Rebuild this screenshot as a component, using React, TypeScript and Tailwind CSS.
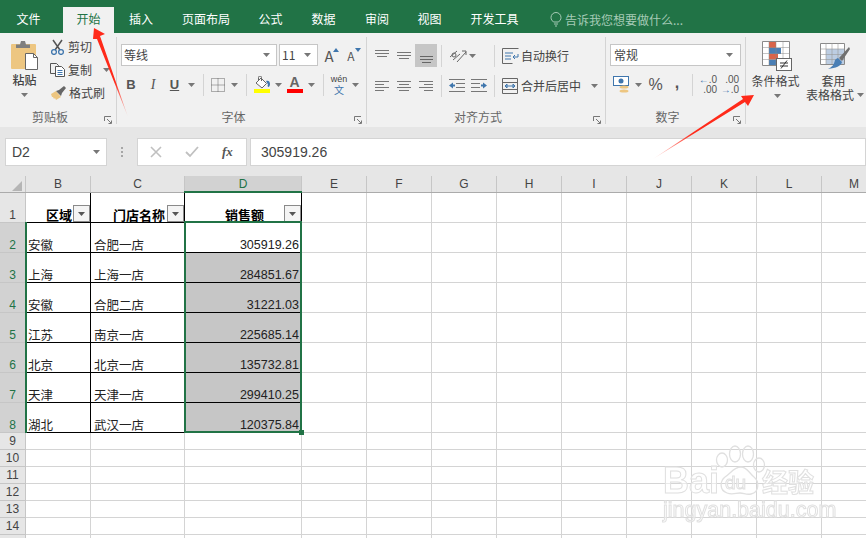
import React from "react";

const FONT = "font-['Noto_Sans_CJK_SC','Liberation_Sans',sans-serif]";
const NUM = "font-['Liberation_Sans','Noto_Sans_CJK_SC',sans-serif]";

const Caret = ({ c = "#777" }: { c?: string }) => (
  <svg width="7" height="4" viewBox="0 0 7 4"><path d="M0 0h7L3.5 4z" fill={c} /></svg>
);
const Slot = ({ w, children }: { w: string; children?: React.ReactNode }) => (
  <div className={`${w} h-full flex items-center justify-center shrink-0`}>{children}</div>
);
const Sep = () => <div className="w-px h-[22px] bg-[#d4d4d4]" />;
const Launcher = () => (
  <svg className="absolute right-[4px] bottom-[0px]" width="8" height="8" viewBox="0 0 8 8" fill="none" stroke="#777">
    <path d="M.5 5V.5H7" /><path d="M3 3l4 4M4.5 7.5h3v-3" />
  </svg>
);
const Lines = ({ rows, color = "#777" }: { rows: [number, number, number][]; color?: string }) => (
  <svg width="16" height="16" viewBox="0 0 16 16" stroke={color}>
    {rows.map((r, i) => <path key={i} d={`M${r[0]} ${r[2] + 0.5}H${r[1]}`} />)}
  </svg>
);

const Group = ({ w, label, launcher, children }: { w: string; label: string; launcher?: boolean; children: React.ReactNode }) => (
  <div className={`${w} shrink-0 h-[87px] relative flex flex-col border-r border-[#d4d4d4]`}>
    <div className="flex-1 min-h-0">{children}</div>
    <div className="h-[14px] text-center text-[12px] leading-[14px] text-[#666] pr-[16px]">{label}</div>
    {launcher && <Launcher />}
  </div>
);

const Clipboard = () => (
  <Group w="w-[117px]" label="剪贴板" launcher>
    <div className="flex h-full">
      <div className="w-[50px] flex flex-col items-center pt-[4px] pr-[1px]">
        <svg width="28" height="29" viewBox="0 0 28 29">
          <path d="M1 3h23a1 1 0 011 1v24H1a1 1 0 01-1-1V4a1 1 0 011-1z" fill="#edc681" />
          <path d="M5 7V3.500h4L10 0h4l1 3.500h4V7z" fill="#7f7f7f" />
          <path d="M14.500 12.500h8l4 4v12h-12z" fill="#fff" stroke="#666" />
          <path d="M22.500 12.500v4h4" fill="none" stroke="#666" />
        </svg>
        <div className="text-[12px] leading-[14px] text-[#444] mt-[3px] font-medium">粘贴</div>
        <div className="mt-[6px] leading-[0]"><Caret /></div>
      </div>
      <div className="flex flex-col -mt-[2px] text-[12px] text-[#444]">
        <div className="h-[23px] flex items-center gap-[3px]">
          <svg width="15" height="16" viewBox="0 0 15 16" fill="none">
            <path d="M3 1l7 10M12 1L5 11" stroke="#555" strokeWidth="1.500" />
            <circle cx="4" cy="13" r="2.400" stroke="#3f76ad" strokeWidth="1.300" /><circle cx="11" cy="13" r="2.400" stroke="#3f76ad" strokeWidth="1.300" />
          </svg>
          <span>剪切</span>
        </div>
        <div className="h-[23px] flex items-center gap-[3px]">
          <svg width="15" height="14" viewBox="0 0 15 14" fill="none" stroke="#555">
            <path d="M.5.5h6l2 2v8h-8z" fill="#f1f1f1" /><path d="M5.500 3.500h6l3 3v7h-9z" fill="#fff" /><path d="M7.500 7.500h5M7.500 9.500h5M7.500 11.500h5" stroke="#3f76ad" />
          </svg>
          <span>复制</span>
          <span className="ml-[8px] leading-[0]"><Caret /></span>
        </div>
        <div className="h-[23px] flex items-center gap-[3px]">
          <svg width="16" height="16" viewBox="0 0 16 16">
            <path d="M1 9l5-3 5 6-5 3-1-2-1 1-1-2-1 0z" fill="#edc681" />
            <path d="M6 6l3-1 5-4 2 2-4 5-1 3z" fill="#666" />
          </svg>
          <span>格式刷</span>
        </div>
      </div>
    </div>
  </Group>
);

const FontGroup = () => (
  <Group w="w-[250px]" label="字体" launcher>
    <div className="pt-[7px] pl-[4px]">
      <div className="flex h-[22px] items-center">
        <div className="w-[156px] h-full bg-white border border-[#c6c6c6] flex items-center pl-[2px] pr-[6px] text-[12px] text-[#444]">
          <span className="flex-1">等线</span><Caret />
        </div>
        <div className="w-[39px] ml-[2px] h-full bg-white border border-[#c6c6c6] flex items-center pl-[2px] pr-[6px] text-[12px] text-[#444]">
          <span className="flex-1">11</span><Caret />
        </div>
        <Slot w="w-[22px]">
          <span className="relative text-[15px] text-[#555] leading-none">A<svg className="absolute -right-[5px] top-0" width="6" height="4"><path d="M0 4l3-4 3 4z" fill="#3f76ad" /></svg></span>
        </Slot>
        <Slot w="w-[22px]">
          <span className="relative text-[12px] text-[#555] leading-none mt-[2px]">A<svg className="absolute -right-[6px] -top-[2px]" width="6" height="4"><path d="M0 0h6L3 4z" fill="#3f76ad" /></svg></span>
        </Slot>
      </div>
      <div className="flex h-[23px] items-center mt-[7px] -ml-[1px] text-[#555]">
        <Slot w="w-[22px]"><span className={`${NUM} font-bold text-[13px]`}>B</span></Slot>
        <Slot w="w-[22px]"><span className="font-['Liberation_Serif'] italic text-[14px]">I</span></Slot>
        <Slot w="w-[21px]"><span className={`${NUM} underline text-[13px] font-bold`}>U</span></Slot>
        <Slot w="w-[13px]"><Caret /></Slot>
        <Slot w="w-[10px]"><Sep /></Slot>
        <Slot w="w-[20px]">
          <svg width="14" height="14" viewBox="0 0 14 14" fill="none" stroke="#666" strokeDasharray="1 1"><path d="M.5.5h13v13H.5zM7 .5v13M.5 7h13" /></svg>
        </Slot>
        <Slot w="w-[13px]"><Caret /></Slot>
        <Slot w="w-[10px]"><Sep /></Slot>
        <Slot w="w-[21px]">
          <svg width="16" height="17" viewBox="0 0 16 17">
            <path d="M2 7l5-5 5.500 5.500L8 12z" fill="#fff" stroke="#666" /><path d="M4.500 4V1.500a1.500 1.500 0 013 0V5" fill="none" stroke="#666" />
            <path d="M12 5c2-1 4 0 4 3 0 2-1 3-1.500 3S13 10 14 8.500z" fill="#3f76ad" />
            <rect y="13" width="16" height="4" fill="#ffff00" />
          </svg>
        </Slot>
        <Slot w="w-[12px]"><Caret /></Slot>
        <Slot w="w-[21px]">
          <div className="flex flex-col items-center w-[16px]">
            <span className={`${NUM} text-[14px] font-bold leading-[13px] text-[#666]`}>A</span>
            <div className="w-[16px] h-[4px] bg-[#ff0000]" />
          </div>
        </Slot>
        <Slot w="w-[13px]"><Caret /></Slot>
        <Slot w="w-[10px]"><Sep /></Slot>
        <Slot w="w-[22px]">
          <div className={`${NUM} flex flex-col items-center leading-none`}>
            <span className="text-[9px] leading-[10px] text-[#444]">wén</span>
            <span className={`${FONT} text-[10px] leading-[11px] text-[#3f76ad]`}>文</span>
          </div>
        </Slot>
        <Slot w="w-[10px]"><Caret /></Slot>
      </div>
    </div>
  </Group>
);

const AlignGroup = () => (
  <Group w="w-[239px]" label="对齐方式" launcher>
    <div className="pt-[7px] pl-[4px] text-[12px] text-[#444]">
      <div className="flex h-[23px] items-center">
        <Slot w="w-[22px]"><Lines rows={[[1, 15, 2], [1, 15, 5], [3, 13, 8]]} /></Slot>
        <Slot w="w-[22px]"><Lines rows={[[1, 15, 4], [1, 15, 7], [3, 13, 10]]} /></Slot>
        <Slot w="w-[22px] bg-[#c6c6c6]"><Lines rows={[[2, 15, 8], [2, 15, 11], [4, 13, 14]]} color="#666" /></Slot>
        <Slot w="w-[8px]"><Sep /></Slot>
        <Slot w="w-[18px] ml-[4px]">
          <svg width="18" height="16" viewBox="0 0 18 16" fill="none" stroke="#666">
            <path d="M1 9l7-6M4 12l7-6" /><circle cx="5" cy="7" r="2" /><path d="M8 14L17 4M13 3h4v4" />
          </svg>
        </Slot>
        <Slot w="w-[10px]"><Caret /></Slot>
        <div className="ml-[17px]"><Sep /></div>
        <div className="flex items-center gap-[2px] ml-[7px]">
          <svg width="17" height="16" viewBox="0 0 17 16" fill="none" stroke="#666">
            <path d="M.5.5h16M.5 15.500h10M.5.5v15" /><path d="M3 5h8M3 8h6M3 11h6" stroke="#3f76ad" /><path d="M16 6v3h-5M13 7l-2 2 2 2" stroke="#3f76ad" />
          </svg>
          <span>自动换行</span>
        </div>
      </div>
      <div className="flex h-[23px] items-center mt-[7px]">
        <Slot w="w-[22px]"><Lines rows={[[1, 15, 3], [1, 10, 6], [1, 15, 9], [1, 10, 12]]} /></Slot>
        <Slot w="w-[22px]"><Lines rows={[[1, 15, 3], [3, 13, 6], [1, 15, 9], [3, 13, 12]]} /></Slot>
        <Slot w="w-[22px]"><Lines rows={[[1, 15, 3], [6, 15, 6], [1, 15, 9], [6, 15, 12]]} /></Slot>
        <Slot w="w-[8px]"><Sep /></Slot>
        <Slot w="w-[22px] ml-[1px]">
          <svg width="16" height="14" viewBox="0 0 16 14" stroke="#777" fill="none">
            <path d="M0 .5h16M7 4.500h9M7 8.500h9M0 12.500h16" /><path d="M0 6.500l4-3v6z" fill="#3f76ad" stroke="none" /><path d="M3 6.500h3" stroke="#3f76ad" strokeWidth="2" />
          </svg>
        </Slot>
        <Slot w="w-[22px]">
          <svg width="16" height="14" viewBox="0 0 16 14" stroke="#777" fill="none">
            <path d="M0 .5h16M0 4.500h9M0 8.500h9M0 12.500h16" /><path d="M16 6.500l-4-3v6z" fill="#3f76ad" stroke="none" /><path d="M10 6.500h3" stroke="#3f76ad" strokeWidth="2" />
          </svg>
        </Slot>
        <div className="ml-[4px]"><Sep /></div>
        <div className="flex items-center gap-[2px] ml-[7px]">
          <svg width="17" height="16" viewBox="0 0 17 16" fill="none" stroke="#666">
            <path d="M.5.5h15v15H.5zM.5 4.500h15M.5 11.500h15" /><path d="M3 8h10M3 8l2-2v4zM13 8l-2-2v4z" stroke="#3f76ad" />
          </svg>
          <span>合并后居中</span>
          <span className="ml-[8px] leading-[0]"><Caret /></span>
        </div>
      </div>
    </div>
  </Group>
);

const NumberGroup = () => (
  <Group w="w-[140px]" label="数字" launcher>
    <div className="pt-[7px] pl-[4px]">
      <div className="w-[131px] h-[22px] bg-white border border-[#c6c6c6] flex items-center pl-[3px] pr-[7px] text-[12px] text-[#444]">
        <span className="flex-1">常规</span><Caret />
      </div>
      <div className="flex h-[23px] items-center mt-[7px] text-[#555]">
        <Slot w="w-[22px]">
          <svg width="17" height="17" viewBox="0 0 17 17">
            <rect x=".5" y=".5" width="15" height="9" fill="#fff" stroke="#3f76ad" /><circle cx="8" cy="5" r="2.500" fill="#3f76ad" />
            <ellipse cx="11" cy="11" rx="4.500" ry="1.600" fill="#edc681" /><ellipse cx="11" cy="15" rx="4.500" ry="1.600" fill="#edc681" />
          </svg>
        </Slot>
        <Slot w="w-[12px]"><Caret /></Slot>
        <Slot w="w-[23px]"><span className={`${NUM} text-[16px]`}>%</span></Slot>
        <Slot w="w-[20px]"><span className={`${NUM} text-[16px] font-bold -mt-[4px]`}>,</span></Slot>
        <Slot w="w-[10px]"><Sep /></Slot>
        <Slot w="w-[22px]">
          <div className={`${NUM} text-[10px] leading-[10px] text-right text-[#555]`}>
            <div><span className="text-[#3f76ad]">←</span>.0</div><div>.00</div>
          </div>
        </Slot>
        <Slot w="w-[22px]">
          <div className={`${NUM} text-[10px] leading-[10px] text-right text-[#555]`}>
            <div>.00</div><div><span className="text-[#3f76ad]">→</span>.0</div>
          </div>
        </Slot>
      </div>
    </div>
  </Group>
);

const StylesGroup = () => (
  <div className="flex-1 h-[87px] flex text-[12px] text-[#444] leading-[14px]">
    <div className="w-[59px] flex flex-col items-center pt-[4px] shrink-0">
      <svg width="30" height="30" viewBox="0 0 30 30" className="ml-[2px]">
        <path d="M.5.5h27v24H.5z" fill="#fff" stroke="#8a8a8a" />
        <path d="M7 7h12v6H7zM7 18.500h7V24H7z" fill="#4a7fb5" />
        <path d="M7 1h7v6H7zM7 13h9v5.500H7z" fill="#d9644a" />
        <path d="M.5 6.500h27M.5 12.500h27M.5 18.500h27M7 .5v24M14 .5v24M21 .5v24" stroke="#8a8a8a" strokeWidth=".5" fill="none" />
        <rect x="14.500" y="17.500" width="15" height="12" fill="#fff" stroke="#666" />
        <path d="M18 22h8M18 25h8M25 19.500l-6 8" stroke="#333" fill="none" />
      </svg>
      <div className="mt-[3px]">条件格式</div>
      <div className="mt-[6px] leading-[0] ml-[3px]"><Caret /></div>
    </div>
    <div className="w-[60px] flex flex-col items-center pt-[4px] shrink-0">
      <svg width="30" height="30" viewBox="0 0 30 30">
        <path d="M.5 2.500h24v21H.5z" fill="#fff" stroke="#8a8a8a" />
        <path d="M6 8h18v15H6z" fill="#bccde2" />
        <path d="M.5 8h24M.5 13.500h24M.5 18.500h24M6 2v21M12 2v21M18 2v21" stroke="#999" strokeWidth=".6" fill="none" />
        <path d="M29 6l-10 11 3 3L30 8z" fill="#707070" />
        <path d="M18 17l4 4c-1 4-6 6-14 7 4-2 6-4 7-9 1-1 2-2 3-2z" fill="#4a7fb5" />
      </svg>
      <div className="mt-[3px] pr-[3px]">套用</div>
      <div className="whitespace-nowrap flex items-center">表格格式<span className="ml-[3px] leading-[0]"><Caret /></span></div>
    </div>
  </div>
);

const tabs: [string, string][] = [
  ["文件", "w-[63px] pr-[6px]"], ["开始", "w-[51px]"], ["插入", "w-[54px]"], ["页面布局", "w-[76px]"],
  ["公式", "w-[53px]"], ["数据", "w-[53px]"], ["审阅", "w-[53px] pl-[1px]"], ["视图", "w-[53px]"], ["开发工具", "w-[77px]"],
];

const TabBar = () => (
  <div className="h-[33px] bg-[#217346] flex items-end text-[12px] text-white shrink-0">
    {tabs.map(([t, w]) => (
      <div key={t} className={`${w} shrink-0 h-[26px] pb-[2px] flex items-center justify-center ${t === "开始" ? "bg-[#f1f1f1] text-[#217346]" : ""}`}>{t}</div>
    ))}
    <div className="h-[26px] pb-[1px] flex items-center ml-[17px] gap-[3px] text-[#a6cbb6]">
      <svg width="12" height="15" viewBox="0 0 12 15" fill="none" stroke="#a6cbb6"><path d="M3.500 10C2 8.500 1 7.500 1 5.500a5 5 0 0110 0c0 2-1 3-2.500 4.500zM4 12h4M5 14h2" /></svg>
      <span>告诉我您想要做什么...</span>
    </div>
  </div>
);

const Ribbon = () => (
  <div className="h-[90px] bg-[#f1f1f1] flex pt-[4px] shrink-0 border-b border-[#d2d2d2] box-content -mb-px">
    <Clipboard /><FontGroup /><AlignGroup /><NumberGroup /><StylesGroup />
  </div>
);

const FormulaBar = () => (
  <div className="h-[49px] bg-[#e6e6e6] flex pt-[11px] pb-[10px] pl-[5px] shrink-0">
    <div className="w-[102px] bg-white border border-[#d4d4d4] flex items-center pl-[6px] pr-[6px] text-[14px] text-[#444]">
      <span className={`${NUM} flex-1`}>D2</span><Caret />
    </div>
    <div className="w-[30px] flex flex-col items-center justify-center gap-[1px]">
      {[0, 1, 2].map((i) => <div key={i} className="w-[2px] h-[2px] bg-[#a6a6a6] mb-[1px]" />)}
    </div>
    <div className="w-[110px] bg-white border border-[#d4d4d4] flex items-center pl-[12px] text-[#c0c0c0]">
      <svg width="12" height="12" viewBox="0 0 12 12" stroke="#c0c0c0" strokeWidth="1.600"><path d="M1 1l10 10M11 1L1 11" /></svg>
      <svg className="ml-[23px]" width="14" height="12" viewBox="0 0 14 12" fill="none" stroke="#c0c0c0" strokeWidth="1.800"><path d="M1 6l4 4 8-9" /></svg>
      <span className="ml-[23px] font-['Liberation_Serif'] italic font-bold text-[13px] text-[#555]">fx</span>
    </div>
    <div className={`${NUM} flex-1 ml-[3px] bg-white border border-[#d4d4d4] flex items-center pl-[10px] text-[14px] text-[#444]`}>305919.26</div>
  </div>
);

const cols = [
  { n: "B", w: "w-[65px]" }, { n: "C", w: "w-[94px]" }, { n: "D", w: "w-[117px]" },
  { n: "E", w: "w-[65px]" }, { n: "F", w: "w-[65px]" }, { n: "G", w: "w-[65px]" }, { n: "H", w: "w-[65px]" },
  { n: "I", w: "w-[65px]" }, { n: "J", w: "w-[65px]" }, { n: "K", w: "w-[65px]" }, { n: "L", w: "w-[65px]" }, { n: "M", w: "w-[65px]" },
];
const data: [string, string, string][] = [
  ["安徽", "合肥一店", "305919.26"], ["上海", "上海一店", "284851.67"], ["安徽", "合肥二店", "31221.03"],
  ["江苏", "南京一店", "225685.14"], ["北京", "北京一店", "135732.81"], ["天津", "天津一店", "299410.25"], ["湖北", "武汉一店", "120375.84"],
];
const Filter = () => (
  <div className="absolute right-[0px] bottom-[0px] w-[17px] h-[17px] bg-[#f4f4f4] border border-[#8a8a8a] flex items-center justify-center">
    <Caret c="#555" />
  </div>
);

const GridCells = () => (
  <>
    {cols.slice(3).map((c) => <div key={c.n} className={`${c.w} shrink-0 border-r border-b border-[#d4d4d4]`} />)}
  </>
);

const Sheet = () => (
  <div className="relative flex-1 bg-white overflow-hidden">
    <div className="flex h-[17px] bg-[#e6e6e6] border-b border-[#ababab]">
      <div className="w-[26px] shrink-0 border-r border-[#c6c6c6] flex items-end justify-end pr-[3px] pb-[1px]">
        <svg width="10" height="10"><path d="M10 0v10H0z" fill="#b5b5b5" /></svg>
      </div>
      {cols.map((c) => (
        <div key={c.n} className={`${c.w} shrink-0 border-r border-[#c6c6c6] flex items-center justify-center text-[12px] ${NUM} ${c.n === "D" ? "bg-[#d2d2d2] text-[#217346]" : "text-[#444]"}`}>{c.n}</div>
      ))}
    </div>
    <div className="flex h-[30px]">
      <div className={`w-[26px] shrink-0 bg-[#e6e6e6] border-r border-b border-[#c6c6c6] flex items-end justify-center text-[12px] leading-[14px] text-[#444] ${NUM}`}>1</div>
      <div className="w-[65px] shrink-0 relative border-r border-b border-black flex items-end pl-[20px] text-[13px] font-bold leading-[14px] text-black whitespace-nowrap">区域<Filter /></div>
      <div className="w-[94px] shrink-0 relative border-r border-b border-black flex items-end pl-[22px] text-[13px] font-bold leading-[14px] text-black whitespace-nowrap">门店名称<Filter /></div>
      <div className="w-[117px] shrink-0 relative border-r border-b border-black flex items-end pl-[40px] text-[13px] font-bold leading-[14px] text-black">销售额<Filter /></div>
      <GridCells />
    </div>
    {data.map((r, i) => (
      <div key={i} className="flex h-[30px]">
        <div className={`w-[26px] shrink-0 bg-[#d2d2d2] border-r border-b border-[#c6c6c6] flex items-end justify-center text-[12px] leading-[14px] text-[#217346] ${NUM}`}>{i + 2}</div>
        <div className="w-[65px] shrink-0 border-r border-b border-black flex items-end pl-[2px] text-[12.500px] leading-[14px] text-[#222]">{r[0]}</div>
        <div className="w-[94px] shrink-0 border-r border-b border-black flex items-end pl-[3px] text-[12.500px] leading-[14px] text-[#222]">{r[1]}</div>
        <div className={`w-[117px] shrink-0 border-r border-b border-black flex items-end justify-end pr-[2px] text-[12.500px] leading-[14px] text-[#222] ${NUM} ${i === 0 ? "" : "bg-[#c6c6c6]"}`}>{r[2]}</div>
        <GridCells />
      </div>
    ))}
    {[9, 10, 11, 12, 13, 14].map((n) => (
      <div key={n} className="flex h-[17px]">
        <div className={`w-[26px] shrink-0 bg-[#e6e6e6] border-r border-b border-[#c6c6c6] flex items-center justify-center text-[12px] text-[#444] ${NUM}`}>{n}</div>
        <div className="w-[65px] shrink-0 border-r border-b border-[#d4d4d4]" />
        <div className="w-[94px] shrink-0 border-r border-b border-[#d4d4d4]" />
        <div className="w-[117px] shrink-0 border-r border-b border-[#d4d4d4]" />
        <GridCells />
      </div>
    ))}
    <div className="flex h-[17px]">
      <div className="w-[26px] shrink-0 bg-[#e6e6e6] border-r border-[#c6c6c6]" />
      <div className="w-[65px] shrink-0 border-r border-[#d4d4d4]" />
      <div className="w-[94px] shrink-0 border-r border-[#d4d4d4]" />
      <div className="w-[117px] shrink-0 border-r border-[#d4d4d4]" />
      {cols.slice(3).map((c) => <div key={c.n} className={`${c.w} shrink-0 border-r border-[#d4d4d4]`} />)}
    </div>
    <div className="absolute left-[25px] top-[46px] w-[2px] h-[211px] bg-[#217346]" />
    <div className="absolute left-[184px] top-[15px] w-[118px] h-[2px] bg-[#217346]" />
    <div className="absolute left-[184px] top-[45px] w-[118px] h-[212px] border-2 border-[#217346]" />
    <div className="absolute left-[299px] top-[254px] w-[5px] h-[5px] bg-[#217346]" />
  </div>
);

const Watermark = () => (
  <div className="absolute left-[660px] top-[445px] w-[165px] h-[80px] pointer-events-none font-['Liberation_Sans',sans-serif] blur-[0.4px]">
    <span className="absolute left-[3px] top-[18px] text-[36px] leading-[36px] font-bold text-white/50 [-webkit-text-stroke:1px_#e0e0e0]">Bai</span>
    <svg className="absolute left-[54px] top-[0px]" width="56" height="52" viewBox="0 0 56 52" fill="none" stroke="#e0e0e0" strokeWidth="1.300">
      <ellipse cx="8" cy="15" rx="5.500" ry="7" />
      <ellipse cx="21" cy="9" rx="5.500" ry="8" />
      <ellipse cx="34" cy="9" rx="5.500" ry="8" />
      <ellipse cx="45" cy="20" rx="5.500" ry="7" />
      <path d="M27 22c6 0 8 6 13 10 5 4 6 15-3 17-5 1-7-1-11-1-4 0-8 2-13 0-8-3-7-12-2-16 6-4 9-10 16-10z" />
    </svg>
    <span className="absolute left-[65px] top-[28px] text-[19px] leading-[20px] font-normal text-white/50 [-webkit-text-stroke:1px_#e0e0e0]">du</span>
    <span className={`absolute left-[102px] top-[22px] text-[26px] leading-[28px] font-bold text-white/50 [-webkit-text-stroke:1px_#e0e0e0] ${FONT}`}>经验</span>
    <span className="absolute left-[3px] top-[53px] text-[21.500px] leading-[24px] whitespace-nowrap text-white/50 [-webkit-text-stroke:1px_#e0e0e0]">jingyan.baidu.com</span>
  </div>
);

const Arrows = () => (
  <svg className="absolute left-0 top-0 pointer-events-none" width="866" height="538">
    <defs>
      <linearGradient id="a1" gradientUnits="userSpaceOnUse" x1="95" y1="30" x2="128" y2="117">
        <stop offset="0" stopColor="#ff2a1a" /><stop offset=".6" stopColor="#ff2a1a" /><stop offset="1" stopColor="#ff2a1a" stopOpacity=".1" />
      </linearGradient>
      <linearGradient id="a2" gradientUnits="userSpaceOnUse" x1="754" y1="95" x2="653" y2="159">
        <stop offset="0" stopColor="#ff2a1a" /><stop offset=".6" stopColor="#ff2a1a" /><stop offset="1" stopColor="#ff2a1a" stopOpacity=".1" />
      </linearGradient>
    </defs>
    <polygon points="94,28 105,34 100,36 128,117 97,39 93,39" fill="url(#a1)" />
    <polygon points="754,95 748,106 745,102 653,159 743,99 741,96" fill="url(#a2)" />
  </svg>
);

export default function App() {
  return (
    <div className={`relative w-[866px] h-[538px] overflow-hidden flex flex-col bg-white ${FONT}`}>
      <TabBar />
      <Ribbon />
      <FormulaBar />
      <Sheet />
      <Watermark />
      <Arrows />
    </div>
  );
}
